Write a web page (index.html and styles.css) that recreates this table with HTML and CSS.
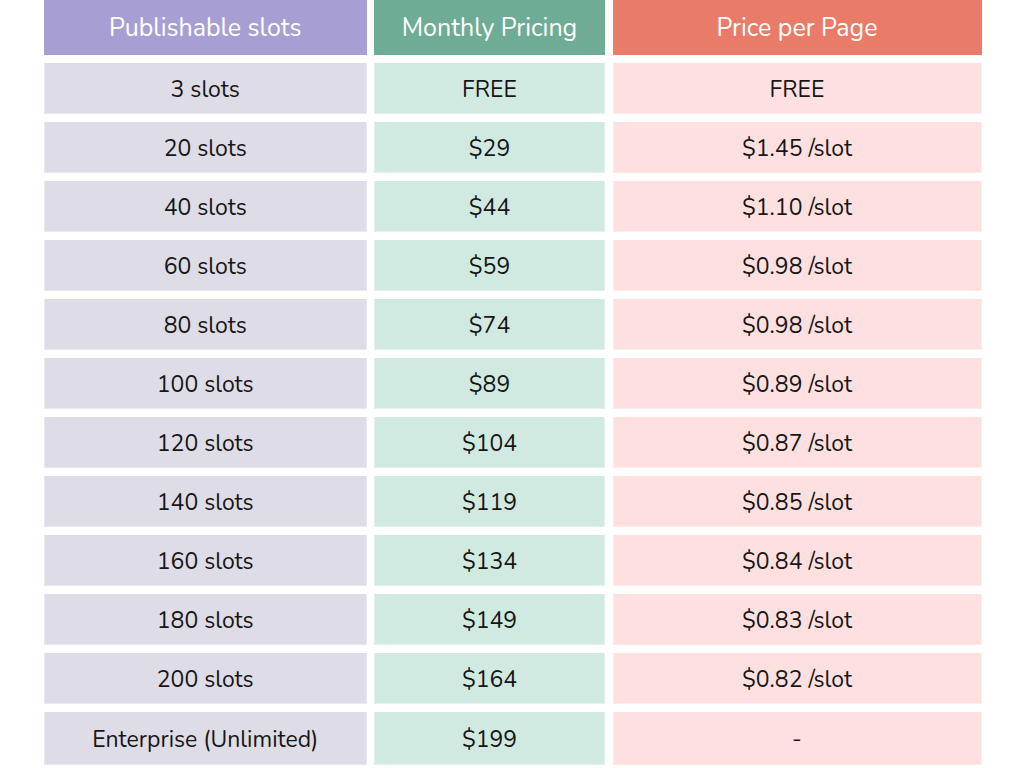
FILE: index.html
```html
<!DOCTYPE html>
<html lang="en">
<head>
<meta charset="utf-8">
<title>Pricing</title>
<link rel="stylesheet" href="styles.css">
</head>
<body>
<div class="table">
  <div class="cell head h1">Publishable slots</div>
  <div class="cell head h2">Monthly Pricing</div>
  <div class="cell head h3">Price per Page</div>

  <div class="cell c1">3 slots</div><div class="cell c2">FREE</div><div class="cell c3">FREE</div>
  <div class="cell c1">20 slots</div><div class="cell c2">$29</div><div class="cell c3">$1.45 /slot</div>
  <div class="cell c1">40 slots</div><div class="cell c2">$44</div><div class="cell c3">$1.10 /slot</div>
  <div class="cell c1">60 slots</div><div class="cell c2">$59</div><div class="cell c3">$0.98 /slot</div>
  <div class="cell c1">80 slots</div><div class="cell c2">$74</div><div class="cell c3">$0.98 /slot</div>
  <div class="cell c1">100 slots</div><div class="cell c2">$89</div><div class="cell c3">$0.89 /slot</div>
  <div class="cell c1">120 slots</div><div class="cell c2">$104</div><div class="cell c3">$0.87 /slot</div>
  <div class="cell c1">140 slots</div><div class="cell c2">$119</div><div class="cell c3">$0.85 /slot</div>
  <div class="cell c1">160 slots</div><div class="cell c2">$134</div><div class="cell c3">$0.84 /slot</div>
  <div class="cell c1">180 slots</div><div class="cell c2">$149</div><div class="cell c3">$0.83 /slot</div>
  <div class="cell c1">200 slots</div><div class="cell c2">$164</div><div class="cell c3">$0.82 /slot</div>
  <div class="cell c1 last">Enterprise (Unlimited)</div><div class="cell c2 last">$199</div><div class="cell c3 last">-</div>
</div>
</body>
</html>
```
FILE: styles.css
```css
html, body {
  margin: 0;
  padding: 0;
  background: #ffffff;
}
body {
  font-family: "Nunito", "Lato", "Open Sans", sans-serif;
  color: #161616;
  width: 1024px;
  height: 768px;
  overflow: hidden;
}
.table {
  display: grid;
  grid-template-columns: 322.5px 231px 369px;
  grid-template-rows: 55px repeat(11, 51px) 53px;
  column-gap: 7.5px;
  row-gap: 8px;
  padding-left: 44px;
}
.cell {
  display: flex;
  align-items: center;
  justify-content: center;
  font-size: 23px;
  padding-top: 3px;
  box-sizing: border-box;
  border: 1px solid rgba(255,255,255,0.35);
  border-top: none;
}
.head {
  color: #ffffff;
  font-size: 25px;
  padding-top: 1px;
  border: none;
}
.h1 { background: #a79fd4; }
.h2 { background: #6fac95; }
.h3 { background: #e87c68; }
.c1 { background: #dedce6; }
.c2 { background: #d1eae1; }
.c3 { background: #ffe0e0; }
```
